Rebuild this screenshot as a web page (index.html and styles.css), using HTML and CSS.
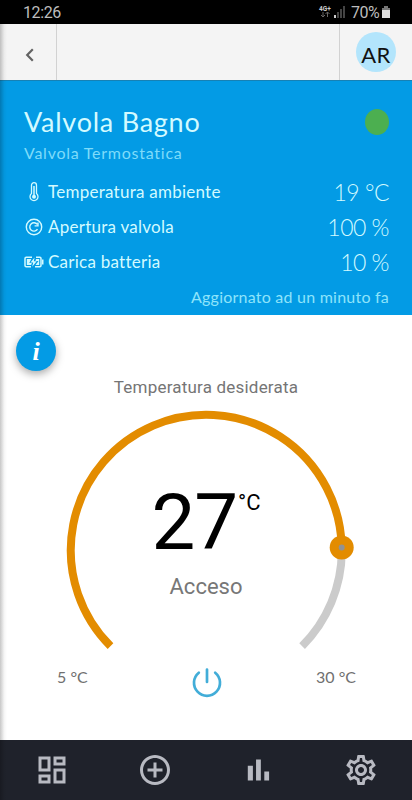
FILE: index.html
```html
<!DOCTYPE html>
<html lang="it">
<head>
    <meta charset="UTF-8">
    <meta name="viewport" content="width=device-width, initial-scale=1.0">
    <title>Valvola Bagno</title>
    <link rel="stylesheet" href="styles.css">
</head>
<body>
    <div class="status-bar">
        <span class="clock">12:26</span>
        <div class="status-icons">
            <svg class="network" width="15" height="16" viewBox="0 0 15 16">
                <text x="1" y="6.5">4G+</text>
                <path d="M5 8v5M3 11l2 2 2-2M9.5 13V8M7.5 10l2-2 2 2"/>
            </svg>
            <svg class="signal" width="12" height="12" viewBox="0 0 12 12">
                <path class="on" d="M0 9h2v3H0z"/>
                <path d="M3 6h2v6H3zM6 3h2v9H6zM9 0h2v12H9z"/>
            </svg>
            <span class="percent">70%</span>
            <svg width="8" height="12" viewBox="0 0 8 12">
                <path fill="#777" d="M2 0h4v2h2v3H0V2h2z"/>
                <path fill="#ddd" d="M0 4h8v8H0z"/>
            </svg>
        </div>
    </div>

    <header class="top-bar">
        <div class="back">
            <svg width="10" height="14" viewBox="0 0 10 14"><path d="M7.8 1.2L2.2 7l5.6 5.8"/></svg>
        </div>
        <div class="user">
            <div class="avatar">AR</div>
        </div>
    </header>

    <section class="device">
        <div class="device-head">
            <h1>Valvola Bagno</h1>
            <span class="online"></span>
        </div>
        <p class="device-type">Valvola Termostatica</p>
        <div class="row">
            <svg class="row-icon" viewBox="0 0 20 20">
                <path fill="none" stroke="currentColor" stroke-width="1.3" d="M7.5 11.5V3.2a2.5 2.5 0 0 1 5 0v8.3a4 4 0 1 1-5 0z"/>
                <path stroke="currentColor" stroke-width="1.5" d="M10 4v10"/>
                <circle cx="10" cy="14.7" r="2" fill="currentColor"/>
            </svg>
            <span class="label">Temperatura ambiente</span>
            <span class="value">19 °C</span>
        </div>
        <div class="row">
            <svg class="row-icon" viewBox="0 0 20 20" fill="none" stroke="currentColor" stroke-width="1.4">
                <circle cx="10" cy="10" r="7.7"/>
                <path d="M13.5 12.2A4.2 4.2 0 1 1 13.3 7.4M14 5.500v3.4h-3.4"/>
            </svg>
            <span class="label">Apertura valvola</span>
            <span class="value">100 %</span>
        </div>
        <div class="row">
            <svg class="row-icon" viewBox="0 0 20 20">
                <path fill="none" stroke="currentColor" stroke-width="1.5" d="M8 5.2H2.2Q1 5.2 1 6.4v7.2q0 1.2 1.2 1.2H7M12 5.2h3.8Q17 5.2 17 6.4v7.2q0 1.2-1.2 1.2H11"/>
                <path fill="currentColor" d="M18 7.5h1.5v5H18zM2.8 7h4.5l-2 4h2.500l-.6 2H2.800zM12 7h3.2v6h-3.7l3-4h-3z"/>
                <path fill="currentColor" d="M10.6 5.5L6.5 10.5h2.7l-1 4.200 4.500-5.500H9.800z"/>
            </svg>
            <span class="label">Carica batteria</span>
            <span class="value">10 %</span>
        </div>
        <p class="updated">Aggiornato ad un minuto fa</p>
    </section>

    <main class="control">
        <button class="info">i</button>
        <h2>Temperatura desiderata</h2>
        <div class="dial">
            <svg width="300" height="248" viewBox="-6 0 300 248">
                <path class="track" d="M279.8 145A135.5 135.5 0 0 1 240.1 240.1"/>
                <path class="progress" d="M48.5 240.1A135.5 135.5 0 1 1 279.75 141.5"/>
                <circle class="knob" cx="279.7" cy="141.5" r="12"/>
                <circle class="knob-dot" cx="279.7" cy="141.5" r="3"/>
            </svg>
            <div class="reading">
                <div class="degrees">27<sup>°C</sup></div>
                <div class="state">Acceso</div>
            </div>
        </div>
        <div class="limits">
            <span class="min">5 °C</span>
            <svg width="30" height="30" viewBox="0 0 30 30">
                <path d="M6.8 4.7A13 13 0 1 0 23.2 4.7M15 1.500V14"/>
            </svg>
            <span class="max">30 °C</span>
        </div>
    </main>

    <nav class="bottom-nav">
        <svg viewBox="0 0 24 24"><path d="M19 5v2h-4V5h4M9 5v6H5V5h4m10 8v6h-4v-6h4M9 17v2H5v-2h4M21 3h-8v6h8V3zM11 3H3v10h8V3zm10 8h-8v10h8V11zm-10 4H3v6h8v-6z"/></svg>
        <svg viewBox="0 0 24 24"><path d="M13 7h-2v4H7v2h4v4h2v-4h4v-2h-4V7zm-1-5C6.48 2 2 6.48 2 12s4.48 10 10 10 10-4.48 10-10S17.52 2 12 2zm0 18c-4.41 0-8-3.59-8-8s3.59-8 8-8 8 3.59 8 8-3.59 8-8 8z"/></svg>
        <svg viewBox="0 0 24 24"><path d="M5.2 9.2h3.4V19H5.200zM10.7 5h3.200v14h-3.200zM16.2 13h3.200v6h-3.200z"/></svg>
        <svg viewBox="0 0 24 24"><path d="M19.43 12.98c.04-.32.07-.64.07-.98 0-.34-.03-.66-.07-.98l2.11-1.65c.19-.15.24-.42.12-.64l-2-3.46c-.09-.16-.26-.25-.44-.25-.06 0-.12.01-.17.03l-2.49 1c-.52-.4-1.08-.73-1.69-.98l-.38-2.65C14.46 2.18 14.25 2 14 2h-4c-.25 0-.46.18-.49.42l-.38 2.65c-.61.25-1.17.59-1.69.98l-2.49-1c-.06-.02-.12-.03-.18-.03-.17 0-.34.09-.43.25l-2 3.46c-.13.22-.07.49.12.64l2.11 1.65c-.04.32-.07.65-.07.98 0 .33.03.66.07.98l-2.11 1.65c-.19.15-.24.42-.12.64l2 3.46c.09.16.26.25.44.25.06 0 .12-.01.17-.03l2.49-1c.52.4 1.08.73 1.69.98l.38 2.65c.03.24.24.42.49.42h4c.25 0 .46-.18.49-.42l.38-2.65c.61-.25 1.17-.59 1.69-.98l2.49 1c.06.02.12.03.18.03.17 0 .34-.09.43-.25l2-3.46c.12-.22.07-.49-.12-.64l-2.11-1.65zm-1.98-1.71c.04.31.05.52.05.73 0 .21-.02.43-.05.73l-.14 1.13.89.7 1.08.84-.7 1.21-1.27-.51-1.04-.42-.9.68c-.43.32-.84.56-1.25.73l-1.06.43-.16 1.13-.2 1.35h-1.4l-.19-1.35-.16-1.13-1.06-.43c-.43-.18-.83-.41-1.23-.71l-.91-.7-1.06.43-1.27.51-.7-1.21 1.08-.84.89-.7-.14-1.13c-.03-.31-.05-.54-.05-.74s.02-.43.05-.73l.14-1.13-.89-.7-1.08-.84.7-1.21 1.27.51 1.04.42.9-.68c.43-.32.84-.56 1.25-.73l1.06-.43.16-1.13.2-1.35h1.39l.19 1.35.16 1.13 1.06.43c.43.18.83.41 1.23.71l.91.7 1.06-.43 1.27-.51.7 1.21-1.07.85-.89.7.14 1.13zM12 8c-2.21 0-4 1.79-4 4s1.79 4 4 4 4-1.79 4-4-1.79-4-4-4zm0 6c-1.1 0-2-.9-2-2s.9-2 2-2 2 .9 2 2-.9 2-2 2z"/></svg>
    </nav>
    <div class="edge-shadow"></div>
</body>
</html>
```
FILE: styles.css
```css
* {
    box-sizing: border-box;
}

body {
    margin: 0;
    height: 800px;
    display: flex;
    flex-direction: column;
    overflow: hidden;
    background: #fff;
    font-family: Lato, sans-serif;
}

h1, h2, p {
    margin: 0;
    font-weight: 400;
}

.status-bar {
    height: 24px;
    padding: 0 22px 0 23px;
    background: #000;
    color: #bdbdbd;
    display: flex;
    justify-content: space-between;
    align-items: center;
    font: 16px Roboto, sans-serif;
}

.clock {
    padding-top: 1px;
    letter-spacing: -0.4px;
}

.status-icons {
    display: flex;
    align-items: center;
}

.network text {
    font: bold 6.5px Roboto, sans-serif;
    fill: #ccc;
}

.network path {
    fill: none;
    stroke: #666;
}

.signal {
    margin-left: 1px;
    fill: #444;
}

.signal .on {
    fill: #ccc;
}

.percent {
    margin: 1px 3px 0 5px;
    letter-spacing: -0.6px;
}

.top-bar {
    height: 56px;
    background: #f4f4f4;
    display: flex;
    justify-content: space-between;
}

.back {
    width: 57px;
    border-right: 1px solid #d2d2d2;
    display: flex;
    align-items: center;
    justify-content: center;
    padding: 5px 0 0 3px;
}

.back path {
    fill: none;
    stroke: #636363;
    stroke-width: 2.2;
}

.user {
    width: 73px;
    border-left: 1px solid #d2d2d2;
    padding: 8px 0 0 16px;
}

.avatar {
    width: 40px;
    height: 40px;
    border-radius: 50%;
    background: #b3e5fc;
    color: #111;
    font-size: 22px;
    line-height: 45px;
    letter-spacing: 0.5px;
    text-align: center;
}

.device {
    height: 235px;
    padding: 24px 23px 0 24px;
    background: #039be5;
    border-top: 1px solid #1681b5;
    color: #d3faff;
}

.device-head {
    display: flex;
    justify-content: space-between;
    height: 34px;
}

.device h1 {
    font-size: 27px;
    line-height: 34px;
    letter-spacing: 0.75px;
}

.online {
    width: 24px;
    height: 26px;
    margin-top: 4px;
    border-radius: 50%;
    background: #4caf50;
}

.device-type {
    font-size: 16px;
    line-height: 28px;
    letter-spacing: 0.75px;
    color: #7edcfa;
    height: 35px;
}

.row {
    display: flex;
    align-items: center;
    height: 35px;
}

.row-icon {
    width: 20px;
    height: 20px;
    margin-right: 4px;
}

.label {
    font-size: 17px;
    letter-spacing: 0.25px;
}

.value {
    margin-left: auto;
    font-size: 23px;
    font-weight: 300;
    letter-spacing: -0.5px;
}

.updated {
    font-size: 16px;
    line-height: 36px;
    letter-spacing: 0.23px;
    text-align: right;
    color: #8ee4fb;
}

.control {
    height: 425px;
    display: flex;
    flex-direction: column;
    align-items: center;
}

.info {
    align-self: flex-start;
    width: 40px;
    height: 40px;
    margin: 16px 0 0 16px;
    padding: 0;
    border: 0;
    border-radius: 50%;
    background: #039be5;
    box-shadow: 0 3px 8px rgba(0, 0, 0, 0.35);
    color: #fff;
    font: italic bold 26px/42px "Liberation Serif", serif;
}

.control h2 {
    margin-top: 5px;
    font: 17px/22px Roboto, sans-serif;
    color: #757575;
    letter-spacing: 0.2px;
}

.dial {
    display: grid;
    justify-items: center;
    margin-top: 8px;
}

.dial svg, .reading {
    grid-area: 1 / 1;
}

.track, .progress {
    fill: none;
    stroke-width: 8;
    stroke: #cbcbcb;
}

.progress {
    stroke: #e38c00;
}

.knob {
    fill: #e38c00;
}

.knob-dot {
    fill: #929292;
}

.reading {
    padding-top: 77px;
    font-family: Roboto, sans-serif;
    text-align: center;
}

.degrees {
    display: flex;
    font-size: 78px;
    line-height: 80px;
    letter-spacing: -1px;
    color: #000;
}

.degrees sup {
    font-size: 22px;
    line-height: 40px;
    margin-left: 1px;
    letter-spacing: 0;
}

.state {
    font-size: 22px;
    line-height: 30px;
    color: #777;
    margin-top: 9px;
}

.limits {
    width: 100%;
    padding: 14px 56px 0 57px;
    display: grid;
    grid-template-columns: 1fr 30px 1fr;
    align-items: start;
    font-size: 16px;
    line-height: 18px;
    color: #707070;
}

.limits path {
    fill: none;
    stroke: #42add8;
    stroke-width: 2.7;
    stroke-linecap: round;
}

.max {
    text-align: right;
}

.bottom-nav {
    height: 60px;
    background: #1f222b;
    display: grid;
    grid-template-columns: repeat(4, 1fr);
    place-items: center;
}

.bottom-nav svg {
    width: 36px;
    height: 36px;
    fill: #b8bac2;
}

/* shadow of the closed side drawer */
.edge-shadow {
    position: absolute;
    top: 24px;
    left: 0;
    width: 7px;
    height: 776px;
    background: linear-gradient(to right, rgba(0, 0, 0, 0.22), rgba(0, 0, 0, 0.04) 60%, transparent);
}
```
